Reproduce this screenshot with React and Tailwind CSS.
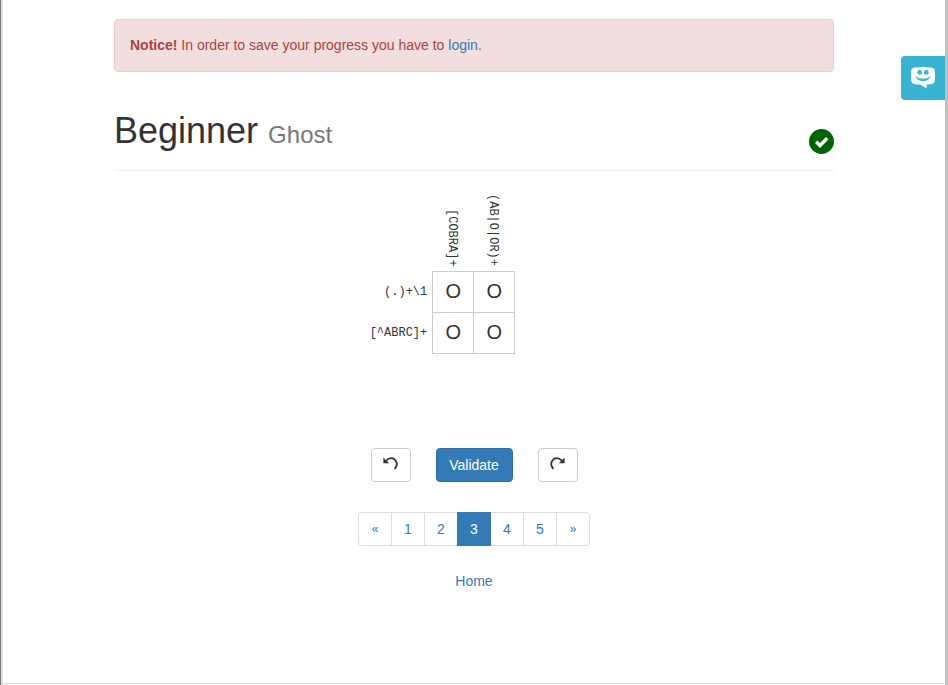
import { useState } from "react";

const columnClues = ["[COBRA]+", "(AB|O|OR)+"];
const rowClues = ["(.)+\\1", "[^ABRC]+"];
const pages = ["«", "1", "2", "3", "4", "5", "»"];

function ArrowIcon({ flipped }) {
  return (
    <svg viewBox="0 0 15 13" className={flipped ? "mb-[2px] h-[13px] w-[15px] -scale-x-100" : "mb-[2px] h-[13px] w-[15px]"} aria-hidden="true">
      <path d="M3.2 3.6C6.4.3 10.4.6 12.4 3.2C14.5 6 14 9.3 11.6 11.8" fill="none" stroke="#333" strokeWidth="1.8" />
      <path d="M.4.6V6.2H6.2L4.4 4.4 2.3 2.4Z" fill="#333" />
    </svg>
  );
}

function CheckIcon() {
  return (
    <svg viewBox="0 0 25 25" className="h-[25px] w-[25px]" role="img" aria-label="Solved">
      <circle cx="12.5" cy="12.5" r="12.5" fill="#006400" />
      <path d="M7.2 12.7l3.8 3.8 7.2-7.3" fill="none" stroke="#fff" strokeWidth="3.4" />
    </svg>
  );
}

function ChatIcon() {
  return (
    <svg viewBox="0 0 24 22" className="h-[22px] w-6" aria-hidden="true">
      <path d="M4 0.5Q12-.5 20 .5Q24 .8 24 5V12Q24 16.7 20 17.2L15.7 17.5V21.5L9.5 17.7L4 17.2Q0 16.7 0 12V5Q0 .8 4 .5Z" fill="#fff" />
      <circle cx="8.7" cy="5.4" r="2.4" fill="#3ab3d1" />
      <circle cx="15.3" cy="5.4" r="2.4" fill="#3ab3d1" />
      <path d="M4 8.5Q6 11.6 12 11.6T20 8.5Q18 14.2 12 14.2T4 8.5Z" fill="#3ab3d1" />
    </svg>
  );
}

function Puzzle() {
  const [cells, setCells] = useState([["O", "O"], ["O", "O"]]);
  const update = (r, c, value) =>
    setCells(cells.map((row, i) => row.map((old, j) => (i === r && j === c ? value : old))));

  return (
    <div className="flex justify-center pr-20">
      <table className="border-collapse text-xs font-normal">
        <thead>
          <tr>
            <td className="w-20" />
            {columnClues.map((clue) => (
              <th key={clue} scope="col" className="h-[90px] p-0 pr-[3px] pb-1 align-bottom font-normal">
                <div className="flex justify-center">
                  <span className="font-['Liberation_Mono',monospace] whitespace-nowrap [writing-mode:vertical-rl]">{clue}</span>
                </div>
              </th>
            ))}
          </tr>
        </thead>
        <tbody>
          {rowClues.map((clue, r) => (
            <tr key={clue}>
              <th scope="row" className="p-0 pr-[5px] text-right font-['Liberation_Mono',monospace] font-normal whitespace-nowrap">{clue}</th>
              {cells[r].map((value, c) => (
                <td key={c} className="border border-[#ccc] p-0">
                  <input
                    aria-label={`Row ${r + 1}, column ${c + 1}`}
                    maxLength={1}
                    value={value}
                    onChange={(e) => update(r, c, e.target.value.toUpperCase())}
                    className="block h-10 w-10 text-center text-xl outline-none"
                  />
                </td>
              ))}
            </tr>
          ))}
        </tbody>
      </table>
    </div>
  );
}

export default function App() {
  return (
    <div className="flex min-h-screen border-l border-[#777] bg-white font-['Liberation_Sans',Arial,sans-serif] text-sm leading-5 text-[#333]">
      <div className="flex grow flex-col border-r-[3px] border-l-2 border-r-[#c0c0c0] border-l-[#dfdfdf] pb-px">
        <main className="grow border-b border-[#ddd] px-4">
          <div className="mx-auto max-w-[720px] pt-[19px]">
            <div role="alert" className="rounded border border-[#ebccd1] bg-[#f2dede] px-[15px] pt-[15px] pb-4 text-[#a94442]">
              <p>
                <strong>Notice!</strong> In order to save your progress you have to{" "}
                <a href="#login" className="text-[#337ab7]">login</a>.
              </p>
            </div>

            <header className="mt-[39px] flex items-end justify-between border-b border-[#eee] pb-4">
              <h1 className="pb-[3px] text-4xl leading-10">
                Beginner <small className="text-2xl text-[#777]">Ghost</small>
              </h1>
              <CheckIcon />
            </header>

            <div className="mt-[10px]">
              <Puzzle />
            </div>

            <div className="mt-[94px] flex justify-center gap-[25px]">
              <button type="button" aria-label="Undo" className="flex h-[34px] w-10 items-center justify-center rounded border border-[#ccc]">
                <ArrowIcon />
              </button>
              <button type="button" className="h-[34px] w-[77px] rounded border border-[#2e6da4] bg-[#337ab7] text-white">
                Validate
              </button>
              <button type="button" aria-label="Redo" className="flex h-[34px] w-10 items-center justify-center rounded border border-[#ccc]">
                <ArrowIcon flipped />
              </button>
            </div>

            <nav aria-label="Puzzles" className="mt-[30px] flex justify-center">
              {pages.map((page) => (
                <a
                  key={page}
                  href={"#" + page}
                  aria-current={page === "3" ? "page" : undefined}
                  className={
                    page === "3"
                      ? "z-10 -ml-px flex h-[34px] w-[34px] items-center justify-center border border-[#337ab7] bg-[#337ab7] text-white"
                      : "-ml-px flex h-[34px] w-[34px] items-center justify-center border border-[#ddd] text-[#337ab7] first:ml-0 first:rounded-l first:text-xs last:rounded-r last:text-xs"
                  }
                >
                  {page}
                </a>
              ))}
            </nav>

            <p className="mt-[25px] text-center">
              <a href="#home" className="text-[#337ab7]">Home</a>
            </p>
          </div>
        </main>
      </div>

      <button type="button" aria-label="Feedback" className="fixed top-14 right-[3px] flex h-11 w-11 items-center justify-center rounded-l-sm bg-[#3ab3d1]">
        <ChatIcon />
      </button>
    </div>
  );
}
